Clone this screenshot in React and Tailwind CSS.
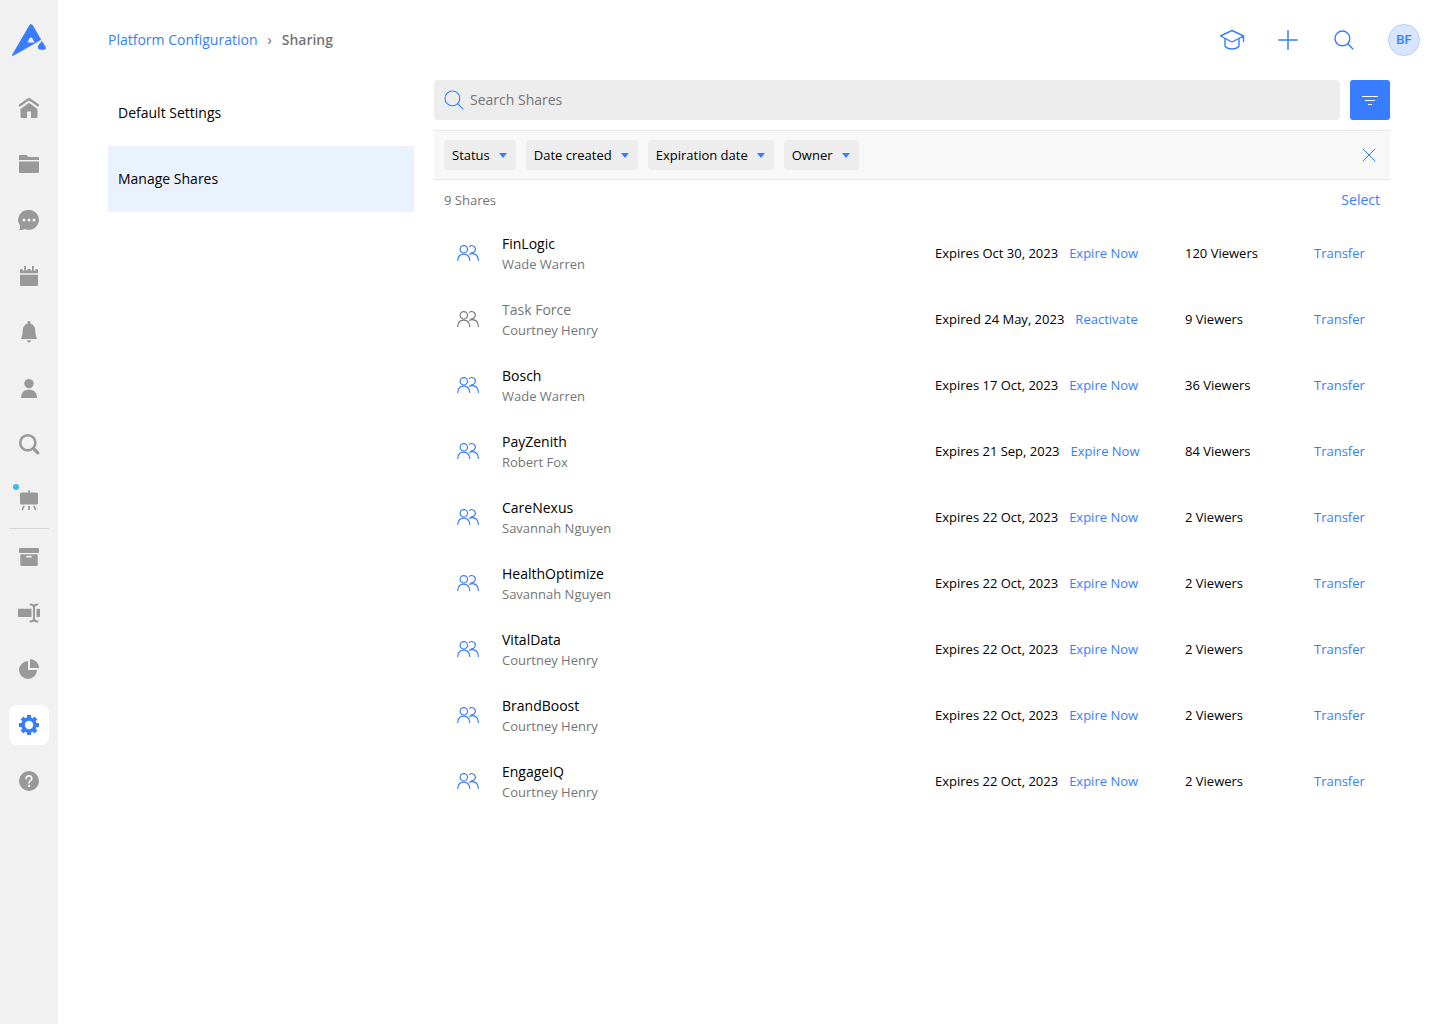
import React, { useState } from 'react';

const shares = [
    { name: 'FinLogic', owner: 'Wade Warren', date: 'Expires Oct 30, 2023', viewers: 120 },
    { name: 'Task Force', owner: 'Courtney Henry', date: 'Expired 24 May, 2023', viewers: 9, expired: true },
    { name: 'Bosch', owner: 'Wade Warren', date: 'Expires 17 Oct, 2023', viewers: 36 },
    { name: 'PayZenith', owner: 'Robert Fox', date: 'Expires 21 Sep, 2023', viewers: 84 },
    { name: 'CareNexus', owner: 'Savannah Nguyen', date: 'Expires 22 Oct, 2023', viewers: 2 },
    { name: 'HealthOptimize', owner: 'Savannah Nguyen', date: 'Expires 22 Oct, 2023', viewers: 2 },
    { name: 'VitalData', owner: 'Courtney Henry', date: 'Expires 22 Oct, 2023', viewers: 2 },
    { name: 'BrandBoost', owner: 'Courtney Henry', date: 'Expires 22 Oct, 2023', viewers: 2 },
    { name: 'EngageIQ', owner: 'Courtney Henry', date: 'Expires 22 Oct, 2023', viewers: 2 },
];

const filters = ['Status', 'Date created', 'Expiration date', 'Owner'];

// Solid 24px icons for the side rail
const railIcons = {
    home: (
        <>
            <path d="M3 9.300 12 3l9 6.300" fill="none" stroke="currentColor" strokeWidth="2.300" strokeLinecap="round" strokeLinejoin="round" />
            <path d="M12 6.800 20.500 13v7.500A1.500 1.500 0 0 1 19 22h-5v-6.500h-4V22H5a1.500 1.500 0 0 1-1.500-1.500V13z" />
        </>
    ),
    folder: (
        <>
            <path d="M2 4a1 1 0 0 1 1-1h6.500l2 2H21a1 1 0 0 1 1 1v2H2z" />
            <path d="M2 9.500h20V20a1 1 0 0 1-1 1H3a1 1 0 0 1-1-1z" />
        </>
    ),
    chat: (
        <>
            <path d="M12.200 2a9.900 9.900 0 1 1-4.300 18.900C6 21.800 4 22 2.200 22c.7-1.100.8-2 .8-4.500A9.900 9.900 0 0 1 12.200 2z" />
            <g className="text-[#f1f1f1]" fill="currentColor">
                <circle cx="7" cy="12" r="1.500" />
                <circle cx="12" cy="12" r="1.500" />
                <circle cx="17" cy="12" r="1.500" />
            </g>
        </>
    ),
    calendar: (
        <>
            <path d="M3 9.300V6a1 1 0 0 1 1-1h1.500v1.500h1.700V2h1.800v4.500h1.500V5h3v1.500h1.500V2h1.800v4.500h1.700V5H20a1 1 0 0 1 1 1v3.300z" />
            <path d="M3 10.700h18V21a1 1 0 0 1-1 1H4a1 1 0 0 1-1-1z" />
        </>
    ),
    bell: (
        <>
            <path d="M12 1c.9 0 1.500.6 1.500 1.500v.9c3 .9 4.500 3.300 4.700 6.600.2 4 .8 6.500 1.800 9H4c1-2.500 1.600-5 1.800-9 .2-3.300 1.700-5.700 4.700-6.600v-.9C10.500 1.600 11.100 1 12 1z" />
            <path d="M10 20.300h4c0 1.300-.9 2.200-2 2.200s-2-.9-2-2.200z" />
        </>
    ),
    user: (
        <>
            <circle cx="12" cy="7.600" r="4.700" />
            <path d="M4 22c0-5 3-8.500 8-8.500s8 3.500 8 8.500z" />
        </>
    ),
    search: (
        <g fill="none" stroke="currentColor">
            <circle cx="10.800" cy="10.800" r="7.600" strokeWidth="2.600" />
            <path d="m16.500 16.500 4.300 4.300" strokeWidth="3.200" strokeLinecap="round" />
        </g>
    ),
    board: (
        <>
            <rect x="3" y="4.500" width="18" height="12" rx="1.500" />
            <path d="M12 2.200v3M7 18l-1.800 4M12 18v4M17 18l1.800 4" fill="none" stroke="currentColor" strokeWidth="1.700" />
        </>
    ),
    archive: (
        <>
            <rect x="2" y="3" width="20" height="5" rx="1" />
            <path fillRule="evenodd" d="M3.300 9.200h17.400V19.500a1.500 1.500 0 0 1-1.500 1.500H4.800a1.500 1.500 0 0 1-1.500-1.500zM10 10.800a.9.9 0 0 0 0 1.800h4a.9.9 0 0 0 0-1.800z" />
        </>
    ),
    rename: (
        <>
            <path d="M2 7.700h12.500V16H2a1 1 0 0 1-1-1V8.700a1 1 0 0 1 1-1zM19.500 7.700H22a1 1 0 0 1 1 1V15a1 1 0 0 1-1 1h-2.500z" />
            <path d="M13.500 3.600c2 0 3.500 1 3.500 3v10.800c0 2-1.500 3-3.500 3M20.500 3.600c-2 0-3.500 1-3.500 3v10.800c0 2 1.500 3 3.500 3" fill="none" stroke="currentColor" strokeWidth="2" strokeLinecap="round" />
        </>
    ),
    chart: (
        <>
            <path d="M11 4v9h9a9 9 0 1 1-9-9z" />
            <path d="M13 2a9 9 0 0 1 9 9h-9z" />
        </>
    ),
    settings: (
        <>
            <circle cx="12" cy="12" r="6" fill="none" stroke="currentColor" strokeWidth="3.600" />
            <path
                d="M12 2v3.500M12 18.500V22M2 12h3.500M18.500 12H22M5 5l2.400 2.400M16.600 16.600 19 19M5 19l2.400-2.400M16.600 7.400 19 5"
                fill="none"
                stroke="currentColor"
                strokeWidth="4"
            />
        </>
    ),
    help: (
        <>
            <circle cx="12" cy="12" r="10" />
            <g className="text-[#f1f1f1]">
                <path d="M9.200 9.600c0-1.700 1.200-2.700 2.800-2.700s2.800 1 2.800 2.500c0 2-2.700 2.200-2.700 4.400" fill="none" stroke="currentColor" strokeWidth="1.800" strokeLinecap="round" />
                <circle cx="12.100" cy="16.900" r="1.200" fill="currentColor" />
            </g>
        </>
    ),
};

const topLinks = [
    ['home', 'Home'],
    ['folder', 'Files'],
    ['chat', 'Messages'],
    ['calendar', 'Calendar'],
    ['bell', 'Notifications'],
    ['user', 'Profile'],
    ['search', 'Search'],
    ['board', 'Boards'],
];

const bottomLinks = [
    ['archive', 'Archive'],
    ['rename', 'Fields'],
    ['chart', 'Insights'],
    ['settings', 'Settings'],
    ['help', 'Help'],
];

const RailLink = ({ icon, label, active, dot }) => (
    <a
        href="#"
        aria-label={label}
        className={`relative flex size-10 items-center justify-center rounded-lg ${active ? 'bg-white text-[#387dff]' : 'text-[#999999]'}`}
    >
        <svg viewBox="0 0 24 24" className="size-6" fill="currentColor">{railIcons[icon]}</svg>
        {dot && <span className="absolute top-1 left-1 size-1.5 rounded-full bg-[#3eb4f6]"></span>}
    </a>
);

const Logo = () => (
    <svg viewBox="0 0 34 32" className="h-8 w-[34px]" fill="#387dff">
        <path
            fillRule="evenodd"
            d="M17.300 1.200C18 -.2 20 -.2 20.800 1.200L29.200 15.800 22 19.900 1.300 31.800C.5 32.300-.3 31.500.2 30.700zM19 13.400c-.5 0-.9.200-1.200.7L15.300 18.500h7.200L20.200 14.100C19.900 13.600 19.500 13.400 19 13.400z"
        />
        <path d="M29.600 16.600 33.500 22.700C34.300 24.300 33.500 25.600 31.800 25.800H28.500C26.800 25.700 25.700 24.500 25.900 22.800 26.300 20.300 29 19.800 29.600 16.600z" />
    </svg>
);

const SearchIcon = ({ className }) => (
    <svg viewBox="0 0 20 20" className={className} fill="none" stroke="currentColor" strokeLinecap="round">
        <circle cx="8.400" cy="8.400" r="7.400" />
        <path d="m13.700 13.700 5.200 5.200" />
    </svg>
);

const PeopleIcon = () => (
    <svg viewBox="0 0 24 24" className="size-6" fill="none" stroke="currentColor" strokeWidth="1.200" strokeLinecap="round">
        <circle cx="7.800" cy="8.300" r="3.700" />
        <path d="M1.700 19.500c.3-3.900 2.600-6.400 6-6.400s5.800 2.500 6.100 6.400" />
        <path d="M13.300 5.400a3.700 3.700 0 1 1 1.800 6.500" />
        <path d="M13.500 13.300c.8-.5 1.600-.7 2.700-.7 3.500 0 5.900 2.700 6.200 6.900" />
    </svg>
);

const FilterSelect = ({ name }) => (
    <div className="relative">
        <select
            aria-label={name}
            className="field-sizing-content block h-[30px] appearance-none rounded bg-[#ededed] pr-[26px] pl-2 text-[13px] text-black"
        >
            <option>{name}</option>
        </select>
        <svg viewBox="0 0 8 5" className="pointer-events-none absolute top-[13px] right-[9px] h-[5px] w-2" fill="#387dff">
            <path d="M0 0h8L4 5z" />
        </svg>
    </div>
);

const App = () => {
    const [query, setQuery] = useState('');

    return (
        <div className="flex min-h-screen bg-white font-['Open_Sans',sans-serif] text-sm text-black">
            {/* Side rail */}
            <nav className="flex w-[58px] shrink-0 flex-col items-center bg-[#f1f1f1] pt-6">
                <a href="#" aria-label="Dashboard" className="mb-8 block">
                    <Logo />
                </a>
                <div className="flex flex-col gap-4">
                    {topLinks.map(([icon, label]) => (
                        <RailLink key={icon} icon={icon} label={label} dot={icon === 'board'} />
                    ))}
                </div>
                <hr className="my-2 w-10 border-[#d5d5d5]" />
                <div className="flex flex-col gap-4">
                    {bottomLinks.map(([icon, label]) => (
                        <RailLink key={icon} icon={icon} label={label} active={icon === 'settings'} />
                    ))}
                </div>
            </nav>

            <div className="min-w-0 flex-1">
                <header className="flex h-20 items-center justify-between pr-5 pl-[50px]">
                    <div className="flex items-center gap-2.5">
                        <a href="#" className="text-[#387dff]">Platform Configuration</a>
                        <span className="text-[#666666]">›</span>
                        <span className="font-semibold text-[#757575]">Sharing</span>
                    </div>

                    <div className="flex items-center gap-4 text-[#387dff]">
                        <button type="button" aria-label="Academy" className="flex size-10 items-center justify-center">
                            <svg viewBox="0 0 28 28" className="size-7" fill="none" stroke="currentColor" strokeWidth="1.400" strokeLinecap="round" strokeLinejoin="round">
                                <path d="M14 4.500 25.500 10 14 16 2.500 10zM25.500 10v5.500" />
                                <path d="M7 12.800V20c1.500 2 4 3 7 3s5.500-1 7-3v-7.200" />
                            </svg>
                        </button>
                        <button type="button" aria-label="Add" className="flex size-10 items-center justify-center">
                            <svg viewBox="0 0 20 20" className="size-5" fill="none" stroke="currentColor" strokeWidth="1.500" strokeLinecap="round">
                                <path d="M10 .7v18.600M.7 10h18.600" />
                            </svg>
                        </button>
                        <button type="button" aria-label="Search" className="flex size-10 items-center justify-center">
                            <SearchIcon className="size-5 stroke-[1.4]" />
                        </button>
                        <button type="button" className="ml-2 flex size-8 items-center justify-center rounded-full border border-[#b5cfff] bg-[#d7e5ff] font-['Roboto',sans-serif] text-[13px] font-medium">
                            BF
                        </button>
                    </div>
                </header>

                <div className="flex gap-5 px-[50px]">
                    <aside className="w-[306px] shrink-0">
                        <a href="#" className="flex h-[66px] items-center px-2.5">Default Settings</a>
                        <a href="#" className="flex h-[66px] items-center bg-[#eaf1ff] px-2.5">Manage Shares</a>
                    </aside>

                    <main className="min-w-0 flex-1">
                        <div className="flex gap-2.5">
                            <label className="flex h-10 flex-1 items-center gap-1.5 rounded bg-[#ededed] px-2.5 text-[#387dff]">
                                <SearchIcon className="size-5 shrink-0 stroke-[1.1]" />
                                <input
                                    type="text"
                                    aria-label="Search Shares"
                                    placeholder="Search Shares"
                                    value={query}
                                    onChange={(e) => setQuery(e.target.value)}
                                    className="w-full bg-transparent text-black outline-none placeholder:text-[#757575]"
                                />
                            </label>
                            <button type="button" aria-label="Filters" className="flex size-10 items-center justify-center rounded-[3px] bg-[#387dff]">
                                <svg viewBox="0 0 16 9" className="h-[9px] w-4" fill="white">
                                    <path d="M0 0h16v1H0zM3 4h10v1H3zM6 8h4v1H6z" />
                                </svg>
                            </button>
                        </div>

                        <div className="mt-2.5 flex h-[50px] items-center gap-2.5 border-y border-[#e6e6e6] bg-[#f8f8f8] px-2.5">
                            {filters.map((name) => (
                                <FilterSelect key={name} name={name} />
                            ))}
                            <button type="button" aria-label="Clear filters" className="ml-auto flex size-[22px] items-center justify-center text-[#387dff]">
                                <svg viewBox="0 0 14 14" className="size-3.5" fill="none" stroke="currentColor" strokeWidth="1" strokeLinecap="round">
                                    <path d="m1 1 12 12M13 1 1 13" />
                                </svg>
                            </button>
                        </div>

                        <div className="flex h-10 items-center justify-between px-2.5">
                            <span className="text-[13px] text-[#757575]">{shares.length} Shares</span>
                            <button type="button" className="text-[#387dff]">Select</button>
                        </div>

                        <table className="w-full table-fixed text-left text-[13px]">
                            <colgroup>
                                <col className="w-[68px]" />
                                <col />
                                <col className="w-[250px]" />
                                <col className="w-[129px]" />
                                <col className="w-[76px]" />
                            </colgroup>
                            <tbody>
                                {shares.map((share) => (
                                    <tr key={share.name} className="h-[66px]">
                                        <td className={`pl-[22px] ${share.expired ? 'text-[#757575]' : 'text-[#387dff]'}`}>
                                            <PeopleIcon />
                                        </td>
                                        <td className="pt-0.5 leading-5">
                                            <div className={`text-sm leading-5 ${share.expired ? 'text-[#757575]' : ''}`}>{share.name}</div>
                                            <div className="text-[#757575]">{share.owner}</div>
                                        </td>
                                        <td>
                                            {share.date}
                                            <button type="button" className="ml-[11px] text-[#387dff]">
                                                {share.expired ? 'Reactivate' : 'Expire Now'}
                                            </button>
                                        </td>
                                        <td>{share.viewers} Viewers</td>
                                        <td>
                                            <button type="button" className="text-[#387dff]">Transfer</button>
                                        </td>
                                    </tr>
                                ))}
                            </tbody>
                        </table>
                    </main>
                </div>
            </div>
        </div>
    );
};

export default App;
